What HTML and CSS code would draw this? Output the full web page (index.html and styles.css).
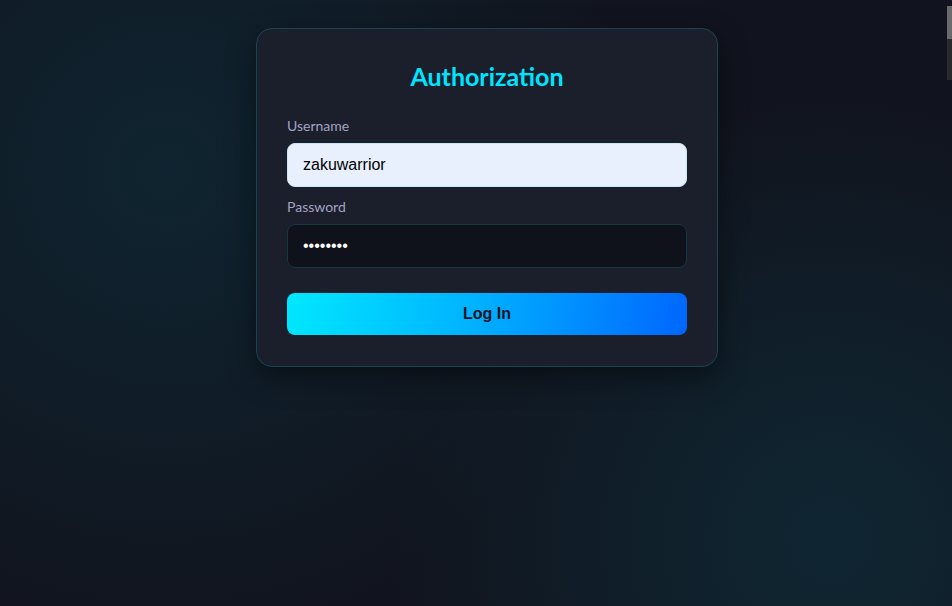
FILE: index.html
```html
<!DOCTYPE html>
<html lang="en">
<head>
<meta charset="utf-8">
<title>Authorization</title>
<link rel="stylesheet" href="styles.css">
</head>
<body>
<main class="page">
  <form class="card" onsubmit="return false">
    <h1 class="title">Authorization</h1>
    <label class="label" for="u">Username</label>
    <input class="field field-filled" id="u" type="text" value="zakuwarrior">
    <label class="label" for="p">Password</label>
    <input class="field field-dark" id="p" type="password" value="password">
    <button class="btn" type="submit">Log In</button>
  </form>
</main>
<div class="scrollthumb"></div>
</body>
</html>
```
FILE: styles.css
```css
html, body {
  margin: 0;
  height: 100%;
}
body {
  background-color: #11141e;
  background-image:
    radial-gradient(circle 470px at 165px 170px, rgba(15, 36, 48, 1) 0%, rgba(15, 36, 48, 0.6) 45%, rgba(15, 36, 48, 0) 100%),
    radial-gradient(circle 440px at 830px 540px, rgba(15, 38, 50, 1) 0%, rgba(15, 38, 50, 0.6) 45%, rgba(15, 38, 50, 0) 100%);
  font-family: Lato, "Open Sans", sans-serif;
  overflow: hidden;
}
.page {
  display: flex;
  justify-content: center;
  padding: 28px 0 0 22px;
}
.card {
  width: 400px;
  padding: 30px 30px 31px;
  background: #1b1e2b;
  border: 1px solid #1a4550;
  border-radius: 16px;
  box-shadow: 0 10px 30px rgba(0, 0, 0, 0.45);
  display: flex;
  flex-direction: column;
}
.title {
  margin: 0 0 24px;
  text-align: center;
  color: #00e5ff;
  font-size: 25px;
  font-weight: 700;
  line-height: 34px;
}
.label {
  color: #a3a3c2;
  font-size: 14px;
  line-height: 18px;
  margin-bottom: 8px;
}
.field {
  box-sizing: border-box;
  width: 400px;
  height: 44px;
  border-radius: 8px;
  padding: 0 15px;
  font-family: "Liberation Sans", Arial, sans-serif;
  font-size: 16px;
  outline: none;
  margin-bottom: 11px;
}
.field-filled {
  background: #e8f0fe;
  border: 1px solid #c9e6f5;
  color: #000;
}
.field-dark {
  background: #10121b;
  border: 1px solid #17373f;
  color: #fff;
  margin-bottom: 25px;
}
.btn {
  height: 42px;
  border: none;
  border-radius: 8px;
  background: linear-gradient(100deg, #00e8ff 0%, #00b4ff 45%, #0066ff 100%);
  color: #0e1222;
  font-family: "Liberation Sans", Arial, sans-serif;
  font-size: 16px;
  font-weight: 700;
  cursor: pointer;
}
.scrollthumb {
  position: fixed;
  top: 6px;
  right: 0;
  width: 5px;
  height: 74px;
  background: linear-gradient(#6a6a6a 0 45%, #2a2a2a 45% 100%);
}
```
